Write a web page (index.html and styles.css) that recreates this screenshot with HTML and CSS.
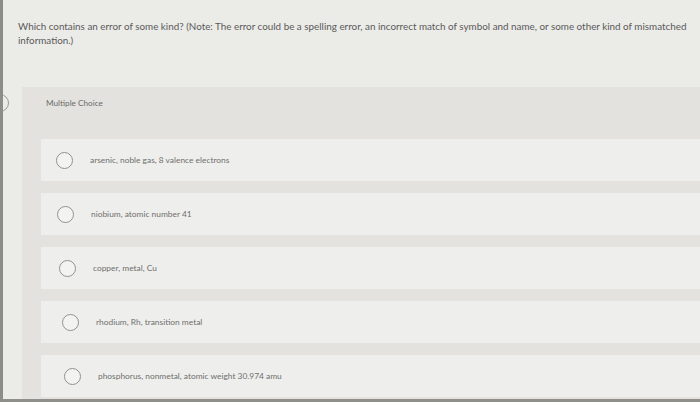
FILE: index.html
```html
<!DOCTYPE html>
<html>
<head>
<meta charset="utf-8">
<link rel="stylesheet" href="styles.css">
</head>
<body>
<div class="screen">
  <p class="question">Which contains an error of some kind? (Note: The error could be a spelling error, an incorrect match of symbol and name, or some other kind of mismatched information.)</p>
  <div class="panel">
    <span class="badge"></span>
    <div class="label">Multiple Choice</div>
    <div class="options">
      <div class="option o1"><span class="radio"></span><span class="text">arsenic, noble gas, 8 valence electrons</span></div>
      <div class="option o2"><span class="radio"></span><span class="text">niobium, atomic number 41</span></div>
      <div class="option o3"><span class="radio"></span><span class="text">copper, metal, Cu</span></div>
      <div class="option o4"><span class="radio"></span><span class="text">rhodium, Rh, transition metal</span></div>
      <div class="option o5"><span class="radio"></span><span class="text">phosphorus, nonmetal, atomic weight 30.974 amu</span></div>
    </div>
  </div>
</div>
</body>
</html>
```
FILE: styles.css
```css
html, body {
  margin: 0;
  padding: 0;
  width: 700px;
  height: 402px;
  overflow: hidden;
  background: #e9e9e6;
}
.screen {
  box-sizing: border-box;
  width: 700px;
  height: 402px;
  border-left: 3px solid #8d8c89;
  border-bottom: 3px solid #8f8e8b;
  background: #ebebe8;
  font-family: Lato, "Open Sans", sans-serif;
  overflow: hidden;
  padding-top: 20px;
}
.question {
  margin: 0 10px 0 15px;
  font-size: 9.85px;
  line-height: 13.5px;
  color: #5a5a59;
}
.panel {
  position: relative;
  margin: 40px 0 0 19px;
  background: #e3e2df;
  padding: 10px 0 0 19px;
  height: 320px;
}
.badge {
  position: absolute;
  left: -31px;
  top: 7px;
  width: 16px;
  height: 16px;
  border: 1px solid #9a9a96;
  border-radius: 50%;
}
.label {
  font-size: 8.2px;
  color: #6a6a69;
  margin-left: 5px;
  line-height: 12px;
}
.options {
  margin-top: 30px;
  display: flex;
  flex-direction: column;
  gap: 12px;
}
.option {
  background: #eeeeec;
  height: 42px;
  display: flex;
  align-items: center;
  padding-left: 15px;
}
.o2 { padding-left: 16px; }
.o3 { padding-left: 18px; }
.o4 { padding-left: 21px; }
.o5 { padding-left: 23px; }
.radio {
  box-sizing: border-box;
  width: 17px;
  height: 17px;
  border: 1px solid #929290;
  border-radius: 50%;
  background: #f3f3f1;
  flex: none;
}
.text {
  margin-left: 17px;
  font-size: 8.4px;
  color: #6e6e6d;
}
```
